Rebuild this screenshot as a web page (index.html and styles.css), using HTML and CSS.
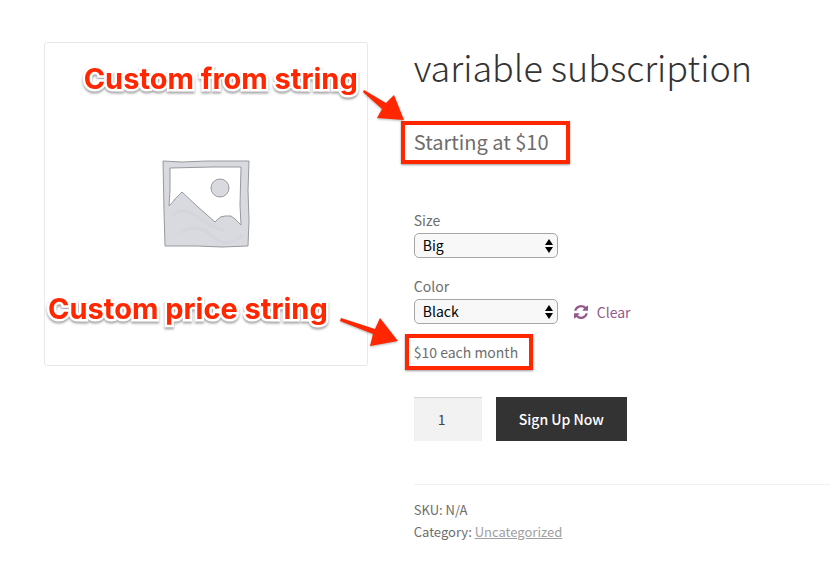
FILE: index.html
```html
<!DOCTYPE html>
<html lang="en">
<head>
    <meta charset="UTF-8">
    <meta name="viewport" content="width=device-width, initial-scale=1.0">
    <title>variable subscription</title>
    <link rel="stylesheet" href="styles.css">
</head>
<body>

    <main class="product">
        <div class="gallery">
            <svg class="placeholder" viewBox="0 0 88 88" role="img" aria-label="Placeholder">
                <path class="frame" fill-rule="evenodd" d="M1 1 L20 2 L45 1 L87 1 L86 30 L87 60 L86 86 L60 87 L35 86 L3 86 L2 50 Z M8 8 L8 30 L7 46 Q11 42 13 39 L20 32 L36 47 L53 62 L55 60 Q58 56 63 56 L69 56 L73 59 L79 65 L78 45 L79 7 L50 7 Z"/>
                <circle class="frame" cx="58" cy="28" r="9"/>
                <path class="wash" d="M10 55 Q22 46 36 57 T62 70 M18 73 Q35 62 50 76 T80 75"/>
            </svg>

            <span class="note note-from">Custom from string</span>
            <svg class="arrow arrow-from" viewBox="0 0 48 40" aria-hidden="true">
                <path d="M4 4 L26 17 L34 9 L44 34 L17 32 L22 23 L3 6 Z"/>
            </svg>

            <span class="note note-price">Custom price string</span>
            <svg class="arrow arrow-price" viewBox="0 0 66 36" aria-hidden="true">
                <path d="M5 4 L39 15 L44 4 L62 27 L34 32 L37 20 L4 7 Z"/>
            </svg>
        </div>

        <div class="summary">
            <h1>variable subscription</h1>
            <p class="price marked">Starting at $10</p>

            <form onsubmit="return false">
                <div class="variation">
                    <label for="size">Size</label>
                    <div class="row">
                        <div class="select">
                            <select id="size">
                                <option>Big</option>
                                <option>Small</option>
                            </select>
                            <svg viewBox="0 0 8 14" aria-hidden="true"><path d="M4 0 L8 6 H0 Z M0 8 H8 L4 14 Z"/></svg>
                        </div>
                    </div>
                </div>

                <div class="variation">
                    <label for="color">Color</label>
                    <div class="row">
                        <div class="select">
                            <select id="color">
                                <option>Black</option>
                                <option>White</option>
                            </select>
                            <svg viewBox="0 0 8 14" aria-hidden="true"><path d="M4 0 L8 6 H0 Z M0 8 H8 L4 14 Z"/></svg>
                        </div>
                        <a class="clear" href="#">
                            <svg viewBox="0 0 1536 1536" aria-hidden="true"><path d="M1511 928q0 5-1 7-64 268-268 434.500T764 1536q-146 0-282.500-55T238 1324l-129 129q-19 19-45 19t-45-19-19-45V960q0-26 19-45t45-19h448q26 0 45 19t19 45-19 45l-137 137q71 66 161 102t187 36q134 0 250-65t186-179q11-17 53-117 8-23 30-23h192q13 0 22.500 9.500t9.500 22.500zM1536 128v448q0 26-19 45t-45 19h-448q-26 0-45-19t-19-45 19-45l138-138Q969 256 768 256q-134 0-250 65T332 500q-11 17-53 117-8 23-30 23H50q-13 0-22.500-9.500T18 608v-7q65-268 270-434.500T768 0q146 0 284 55.500T1297 212l130-129q19-19 45-19t45 19 19 45z"/></svg>
                            Clear
                        </a>
                    </div>
                </div>

                <p class="variation-price marked">$10 each month</p>

                <div class="cart">
                    <input class="qty" type="text" inputmode="numeric" value="1" aria-label="Quantity">
                    <button class="btn" type="submit">Sign Up Now</button>
                </div>
            </form>

            <div class="meta">
                <p>SKU: N/A</p>
                <p>Category: <a href="#">Uncategorized</a></p>
            </div>
        </div>
    </main>

</body>
</html>
```

FILE: styles.css
```css
* {
    padding: 0;
    margin: 0;
    box-sizing: border-box;
}

body {
    background-color: #fff;
    color: #6d6d6d;
    font-family: 'Noto Sans CJK SC', 'Open Sans', sans-serif;
    font-size: 14px;
    line-height: 24px;
}

.product {
    display: grid;
    grid-template-columns: 7fr 9fr;
    gap: 46px;
    align-items: start;
    padding: 42px 3px 32px 44px;
}

/* product image */
.gallery {
    position: relative;
    aspect-ratio: 1;
    display: flex;
    align-items: center;
    justify-content: center;
    border: 1px solid #e8e8e8;
    border-radius: 3px;
}

.placeholder {
    width: 88px;
    height: 88px;
}

.frame {
    fill: #d8dadf;
    stroke: #98999c;
    stroke-width: 1;
}

.wash {
    fill: none;
    stroke: #d4d6db;
    stroke-width: 3;
}

/* red callouts */
.note {
    position: absolute;
    color: #ff2600;
    font-family: Inter, sans-serif;
    font-size: 29px;
    font-weight: 700;
    line-height: 36px;
    white-space: nowrap;
    -webkit-text-stroke: 5px #fff;
    paint-order: stroke fill;
    stroke-linejoin: round;
    filter: drop-shadow(0 2px 1px rgba(0, 0, 0, 0.35));
}

.note-from {
    top: 18px;
    right: 9px;
}

.note-price {
    top: 248px;
    right: 39px;
}

.arrow {
    position: absolute;
    fill: #ff2600;
    filter: drop-shadow(0 1px 1px rgba(0, 0, 0, 0.3));
}

.arrow-from {
    width: 48px;
    top: 43px;
    right: -41px;
}

.arrow-price {
    width: 66px;
    top: 271px;
    right: -35px;
}

.marked {
    width: fit-content;
    border: 4px solid #ff2600;
    box-shadow: 0 1px 2px rgba(0, 0, 0, 0.4);
}

/* summary */
h1 {
    color: #333;
    font-size: 36px;
    font-weight: 300;
    line-height: 48px;
    margin-bottom: 31px;
}

.price {
    margin: 0 0 44px -13px;
    padding: 0 17px 2px 9px;
    font-size: 20px;
    line-height: 33px;
}

.variation {
    margin-bottom: 16px;
}

.variation label {
    display: block;
}

.row {
    display: flex;
    align-items: center;
    gap: 16px;
    margin-top: 1px;
    height: 25px;
}

.select {
    position: relative;
    width: 144px;
}

.select select {
    appearance: none;
    display: block;
    width: 100%;
    height: 25px;
    padding: 0 24px 0 8px;
    background-color: #f8f8f8;
    border: 1px solid #a6a6a6;
    border-radius: 5px;
    color: #000;
    font: inherit;
    line-height: 23px;
}

.select svg {
    position: absolute;
    top: 6px;
    right: 5px;
    width: 8px;
    height: 14px;
    pointer-events: none;
}

.clear {
    display: flex;
    align-items: center;
    gap: 9px;
    color: #96588a;
    line-height: 22px;
    text-decoration: none;
}

.clear svg {
    width: 14px;
    height: 14px;
    fill: #96588a;
}

.variation-price {
    margin: -6px 0 27px -9px;
    padding: 0 11px 0 5px;
    line-height: 28px;
}

.cart {
    display: flex;
    gap: 14px;
}

.qty {
    width: 68px;
    height: 44px;
    padding: 0 12px 0 0;
    background-color: #f2f2f2;
    border: 0;
    box-shadow: inset 0 1px 1px rgba(0, 0, 0, 0.125);
    color: #43454b;
    font: inherit;
    text-align: center;
}

.btn {
    height: 44px;
    padding: 0 23px;
    background-color: #333;
    border: 0;
    color: #fff;
    font: inherit;
    font-weight: 500;
    cursor: pointer;
}

.btn:hover {
    background-color: #1a1a1a;
}

.meta {
    margin-top: 43px;
    padding-top: 14px;
    border-top: 1px solid #f0f0f0;
    font-size: 13px;
    line-height: 22px;
}

.meta a {
    color: #a0a0a0;
}
```
